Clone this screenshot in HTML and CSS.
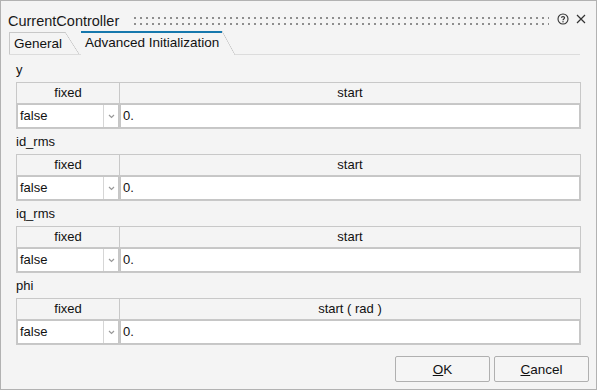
FILE: index.html
```html
<!DOCTYPE html>
<html lang="en">
<head>
  <meta charset="UTF-8">
  <title>CurrentController</title>
  <link rel="stylesheet" href="styles.css">
</head>
<body>
  <div class="dialog">
    <div class="titlebar">
      <span class="title">CurrentController</span>
      <span class="grip"></span>
      <svg class="help-icon" width="12" height="12" viewBox="0 0 12 12">
        <circle cx="6" cy="6" r="5" fill="none" stroke="#333" stroke-width="1.1"/>
        <path d="M4.4 4.8 C4.4 3.2 7.6 3.2 7.6 4.8 C7.6 6 6 6 6 7.2" fill="none" stroke="#333" stroke-width="1.1"/>
        <circle cx="6" cy="8.8" r="0.7" fill="#333"/>
      </svg>
      <svg class="close-icon" width="10" height="10" viewBox="0 0 10 10">
        <path d="M1 1 L9 9 M9 1 L1 9" stroke="#333" stroke-width="1.2"/>
      </svg>
    </div>

    <div class="tabs">
      <div class="tab">General</div>
      <div class="tab active">Advanced Initialization</div>
    </div>

    <div class="content">
      <div class="param">
        <div class="param-name">y</div>
        <div class="param-grid">
          <div class="head">fixed</div>
          <div class="head">start</div>
          <div class="select"><span class="value">false</span><span class="arrow"><svg width="7" height="5" viewBox="0 0 7 5"><path d="M1 1 L3.5 3.5 L6 1" fill="none" stroke="#999" stroke-width="1.2"/></svg></span></div>
          <div class="input">0.</div>
        </div>
      </div>

      <div class="param">
        <div class="param-name">id_rms</div>
        <div class="param-grid">
          <div class="head">fixed</div>
          <div class="head">start</div>
          <div class="select"><span class="value">false</span><span class="arrow"><svg width="7" height="5" viewBox="0 0 7 5"><path d="M1 1 L3.5 3.5 L6 1" fill="none" stroke="#999" stroke-width="1.2"/></svg></span></div>
          <div class="input">0.</div>
        </div>
      </div>

      <div class="param">
        <div class="param-name">iq_rms</div>
        <div class="param-grid">
          <div class="head">fixed</div>
          <div class="head">start</div>
          <div class="select"><span class="value">false</span><span class="arrow"><svg width="7" height="5" viewBox="0 0 7 5"><path d="M1 1 L3.5 3.5 L6 1" fill="none" stroke="#999" stroke-width="1.2"/></svg></span></div>
          <div class="input">0.</div>
        </div>
      </div>

      <div class="param">
        <div class="param-name">phi</div>
        <div class="param-grid">
          <div class="head">fixed</div>
          <div class="head">start ( rad )</div>
          <div class="select"><span class="value">false</span><span class="arrow"><svg width="7" height="5" viewBox="0 0 7 5"><path d="M1 1 L3.5 3.5 L6 1" fill="none" stroke="#999" stroke-width="1.2"/></svg></span></div>
          <div class="input">0.</div>
        </div>
      </div>
    </div>

    <div class="buttons">
      <button class="btn"><u>O</u>K</button>
      <button class="btn"><u>C</u>ancel</button>
    </div>
  </div>
</body>
</html>
```

FILE: styles.css
```css
* {
  margin: 0;
  padding: 0;
  box-sizing: border-box;
}

body {
  font-family: "Liberation Sans", Arial, sans-serif;
  font-size: 13px;
  color: #111;
  background: #f4f4f4;
}

.dialog {
  width: 597px;
  height: 390px;
  border: 1px solid #b2b2b2;
  background: #f4f4f4;
  display: flex;
  flex-direction: column;
}

/* title bar */
.titlebar {
  height: 30px;
  display: flex;
  align-items: flex-end;
  padding: 0 10px 1px 7px;
}

.title {
  font-size: 14.5px;
  line-height: 17px;
  color: #1a1a1a;
}

.grip {
  flex: 1;
  height: 8px;
  margin: 0 8px 5px 15px;
  background-image: radial-gradient(circle at 1px 1px, #8e8e8e 1.1px, transparent 1.3px);
  background-size: 6px 6px;
}

.help-icon {
  margin: 0 4px 5px 0;
}

.close-icon {
  margin: 0 0 6px 3px;
}

/* tabs */
.tabs {
  height: 24px;
  display: flex;
  align-items: flex-end;
  margin: 0 16px 0 8px;
  border-bottom: 1px solid #dcdcdc;
  font-size: 13.5px;
}

.tab {
  position: relative;
  height: 22px;
  line-height: 21px;
  padding: 0 3px 0 4px;
  margin-right: 16px;
  border-top: 1px solid #c8c8c8;
  border-left: 1px solid #c8c8c8;
  background: #f4f4f4;
}

.tab::after {
  content: "";
  position: absolute;
  top: -1px;
  right: -14px;
  width: 14px;
  height: calc(100% + 1px);
  background: linear-gradient(to top right, #f4f4f4 calc(50% - 0.6px), #c4c4c4 50%, transparent calc(50% + 0.6px));
}

.tab.active {
  height: 24px;
  line-height: 20px;
  margin-bottom: -1px;
  padding: 0 3px 0 4px;
  border-left: none;
  border-top: 2px solid #1678ad;
}

.tab.active::after {
  top: -2px;
  right: -13px;
  width: 13px;
  height: calc(100% + 2px);
}

/* parameters */
.content {
  flex: 1;
  padding: 2px 15px 0;
}

.param-name {
  height: 25px;
  line-height: 16px;
  padding: 5px 0 4px;
}

.param-grid {
  display: grid;
  grid-template-columns: 102px 1fr;
  grid-template-rows: 20px 24px;
  gap: 1px;
  background: #c8c8c8;
  border: 1px solid #c8c8c8;
}

.head {
  background: #f4f4f4;
  text-align: center;
  line-height: 20px;
}

.select {
  display: flex;
  background: #fff;
  border: 1px solid #c6c6c6;
}

.select .value {
  flex: 1;
  padding-left: 2px;
  line-height: 22px;
}

.select .arrow {
  width: 15px;
  border-left: 1px solid #d6d6d6;
  display: flex;
  align-items: center;
  justify-content: center;
}

.input {
  background: #fff;
  border: 1px solid #c6c6c6;
  padding-left: 2px;
  line-height: 22px;
}

/* buttons */
.buttons {
  display: flex;
  justify-content: flex-end;
  gap: 4px;
  padding: 0 7px 7px 0;
}

.btn {
  width: 95px;
  height: 26px;
  font-family: inherit;
  font-size: 13.5px;
  color: #111;
  background: #f5f5f5;
  border: 1px solid #b0b0b0;
  border-radius: 2px;
}
```
